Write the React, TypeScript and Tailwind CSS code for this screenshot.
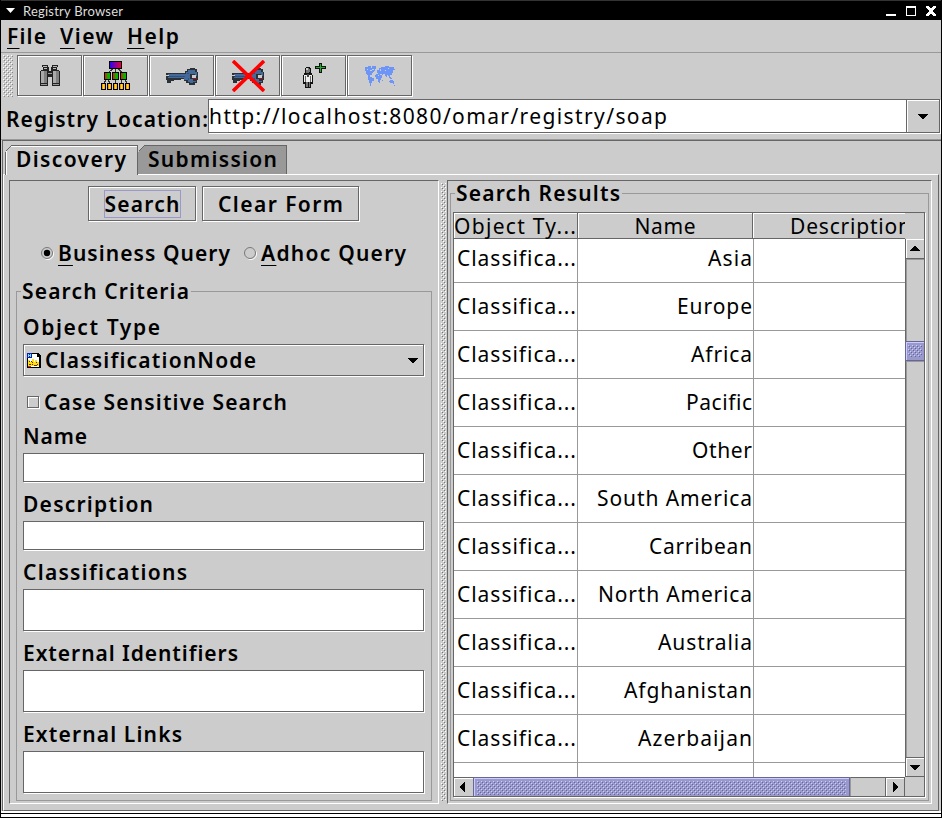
import { useLayoutEffect, useRef, useState, type ReactNode } from "react";
import clsx from "clsx";

/* Raised/etched one-pixel frame used by buttons and combo boxes */
const FLUSH = "border border-[#666] shadow-[inset_1px_1px_0_#fff,1px_1px_0_#fff]";
const FIELD = "border border-[#666] bg-white shadow-[1px_1px_0_#fff]";
const BOLD = "font-['Noto_Sans','Open_Sans',sans-serif] font-semibold text-[21px] leading-[28px]";
const PLAIN = "font-['Noto_Sans','Open_Sans',sans-serif] text-[21px] leading-[28px]";

/* Text spread over a given width by letter spacing */
function Fit({ w, className, children }: { w: number; className?: string; children: ReactNode }) {
  const ref = useRef<HTMLSpanElement>(null);
  const [gap, setGap] = useState(0);
  useLayoutEffect(() => {
    const el = ref.current;
    if (!el) return;
    el.style.letterSpacing = "0px";
    const n = Math.max(1, (el.textContent ?? "").length - 1);
    const g = (w - el.getBoundingClientRect().width) / n;
    el.style.letterSpacing = `${g}px`;
    setGap(g);
  }, [w]);
  return (
    <span ref={ref} className={clsx("inline-block shrink-0 whitespace-pre", className)} style={{ letterSpacing: gap, marginRight: -gap }}>
      {children}
    </span>
  );
}

function U({ children }: { children: string }) {
  return <span className="underline decoration-1 underline-offset-[4px]">{children}</span>;
}

function Bumps({ id, light, dark, className }: { id: string; light: string; dark: string; className: string }) {
  return (
    <svg className={clsx("block", className)} shapeRendering="crispEdges">
      <defs>
        <pattern id={id} width="4" height="4" patternUnits="userSpaceOnUse">
          <rect x="0" y="0" width="1" height="1" fill={light} />
          <rect x="1" y="1" width="1" height="1" fill={dark} />
          <rect x="2" y="2" width="1" height="1" fill={light} />
          <rect x="3" y="3" width="1" height="1" fill={dark} />
        </pattern>
      </defs>
      <rect width="100%" height="100%" fill={`url(#${id})`} />
    </svg>
  );
}

function Arrow({ dir }: { dir: "up" | "down" | "left" | "right" }) {
  const d = {
    down: "M0 0h10v1h-1v1h-1v1h-1v1h-1v1h-2v-1h-1v-1h-1v-1h-1v-1h-1z",
    up: "M0 5h10v-1h-1v-1h-1v-1h-1v-1h-1v-1h-2v1h-1v1h-1v1h-1v1h-1z",
    left: "M5 0v10h-1v-1h-1v-1h-1v-1h-1v-1h-1v-2h1v-1h1v-1h1v-1h1v-1z",
    right: "M0 0v10h1v-1h1v-1h1v-1h1v-1h1v-2h-1v-1h-1v-1h-1v-1h-1v-1z",
  }[dir];
  const flat = dir === "up" || dir === "down";
  return (
    <svg width={flat ? 10 : 5} height={flat ? 5 : 10} shapeRendering="crispEdges" className="block shrink-0">
      <path d={d} />
    </svg>
  );
}

function Binoculars() {
  return (
    <svg width="22" height="22" viewBox="0 0 22 22" shapeRendering="crispEdges">
      <path d="M3 0h6v2h1v4h2v-4h1v-2h6v2h-1v3h2v1h1v15h-8v-9h-4v9h-8v-15h1v-1h2v-3h-1z" fill="#222" />
      <path d="M4 1h4v1h-4zM14 1h4v1h-4zM5 3h3v1h-3zM14 3h3v1h-3z" fill="#bbb" />
      <path d="M2 6h3v12h-3zM14 6h3v12h-3z" fill="#aaa" />
      <path d="M5 6h3v12h-3zM17 6h3v12h-3z" fill="#808080" />
      <path d="M2 19h6v1h-6zM14 19h6v1h-6zM9 8h4v1h-4z" fill="#999" />
    </svg>
  );
}

function Tree() {
  return (
    <svg width="30" height="30" viewBox="0 0 30 30" shapeRendering="crispEdges">
      <defs>
        <linearGradient id="top"><stop stopColor="#20f" /><stop offset="1" stopColor="#f00030" /></linearGradient>
        <linearGradient id="mid"><stop offset=".1" stopColor="#e02000" /><stop offset=".6" stopColor="#00b800" /></linearGradient>
        <linearGradient id="leaf"><stop stopColor="#f40" /><stop offset=".55" stopColor="#fe2" /><stop offset="1" stopColor="#f60" /></linearGradient>
      </defs>
      <path d="M12 8L8 11M14.5 8v3M17 8L21 11M5 19L3 22M7 19L9 22M14.5 19v3M21 19L20 22M24 19L26 22" stroke="#333" fill="none" />
      <rect x="8.5" y=".5" width="12" height="7" fill="url(#top)" stroke="#000" />
      {[3.5, 11.5, 19.5].map((x) => <rect key={x} x={x} y="11.5" width="6" height="7" fill="url(#mid)" stroke="#000" />)}
      {[0.5, 6.5, 12.5, 18.5, 24.5].map((x) => <rect key={x} x={x} y="22.5" width="4" height="6" fill="url(#leaf)" stroke="#000" />)}
    </svg>
  );
}

function Key() {
  return (
    <>
      <path d="M0 5h19v-2h2v-2h3v-1h5v1h2v3h1v8h-1v3h-2v2h-6v-2h-3v-2h-2v-2h-3v1h-7v1h-3v2h-4v-3h-1v-2h-1v-2h10v-1h-10z" fill="#2a3238" />
      <path d="M2 6h18v-2h2v-2h7v2h2v4h-2v-2h-5v5h2v3h-4v-2h-4v-2h-16v-1h12v-1h-11z" fill="#456a9a" />
      <path d="M3 8h16v1h-16zM21 5h2v1h-2zM27 13h3v1h-3zM22 10h1v2h-1z" fill="#34507c" />
      <path d="M24 11h3v2h3v1h-3v1h-3z" fill="#456a9a" />
      <path d="M26 7h4v3h-4z" fill="#ccc" /><path d="M27 10h4v1h-4z" fill="#912" />
    </>
  );
}

function Person() {
  return (
    <svg width="23" height="26" viewBox="0 0 23 26" shapeRendering="crispEdges">
      <path d="M3 4h4v1h1v5h1v2h1v9h-2v4h-6v-4h-2v-9h1v-2h1v-5h1z" fill="#111" />
      <path d="M3 5h3v1h1v3h-1v1h-3z" fill="#777" /><path d="M3 5h2v2h-2z" fill="#ccc" />
      <path d="M1 12h8v7h-8z" fill="#eee" /><path d="M2.5 13v6M7.5 13v6" stroke="#666" />
      <path d="M4 11h2v3h-2z" fill="#444" /><path d="M3 19h2v5h-2zM6 19h1v5h-1z" fill="#777" />
      <path d="M16 0h3v3h4v3h-4v4h-3v-4h-4v-3h4z" fill="#111" /><path d="M17 1h1v3h4v1h-4v4h-1v-4h-4v-1h4z" fill="#20b030" />
    </svg>
  );
}

function WorldMap() {
  return (
    <svg width="32" height="22" viewBox="0 0 32 22" shapeRendering="crispEdges">
      <path d="M1 2h3v-1h3v2h1v2h2v2h-1v1h-1v2h-2v1h-2v-1h-1v-1h-1v-3h-1zM8 1h4v3h-1v2h-1v-2h-2zM4 11h2v1h2v1h2v3h-2v2h-1v3h-1v-3h-1v-3h-1zM13 5h2v-2h2v-1h4v-1h4v1h5v2h1v1h-2v3h-1v2h-2v2h-1v-1h-1v-1h-1v2h-1v-1h-1v-2h-2v1h-1v-1h-4v-1h-1zM12 9h4v1h2v3h-1v2h-1v3h-1v-1h-1v-3h-2v-2h-1v-2h1zM25 12h2v1h1v1h-2v-1h-1zM26 15h3v1h1v3h-1v-1h-3v-1h-1v-1h1zM30 20h1v1h-1zM18 15h1v1h-1z" fill="#6d95f8" />
      <path d="M3 4h1v1h-1zM6 5h2v1h-2zM16 4h1v2h-1zM21 5h1v1h-1zM24 3h1v1h-1zM14 10h1v1h-1z" fill="#c4cde4" />
    </svg>
  );
}

function ToolButton({ children }: { children: ReactNode }) {
  return <div className={clsx("mr-px flex h-[41px] w-[65px] items-center justify-center pl-px", FLUSH)}>{children}</div>;
}

function Toolbar() {
  return (
    <div className="flex h-[46px] shrink-0 pt-[2px] pl-[2px]">
      <Bumps id="b-tool" light="#fff" dark="#888" className="mr-[4px] h-[42px] w-[10px]" />
      <ToolButton><Binoculars /></ToolButton>
      <ToolButton><Tree /></ToolButton>
      <ToolButton><svg width="32" height="18" shapeRendering="crispEdges" className="mt-[3px]"><Key /></svg></ToolButton>
      <ToolButton>
        <svg width="33" height="32">
          <g transform="translate(0 8)" shapeRendering="crispEdges"><Key /></g>
          <path d="M1 1L32 31M32 1L1 31" stroke="#f00" strokeWidth="3.6" />
        </svg>
      </ToolButton>
      <ToolButton><Person /></ToolButton>
      <ToolButton><WorldMap /></ToolButton>
    </div>
  );
}

function Tab({ label, w, active, className }: { label: string; w: number; active?: boolean; className: string }) {
  return (
    <div className={clsx("relative border-t border-r border-[#666]", className, active ? "z-10 h-[30px] border-l bg-[#ccc] shadow-[inset_1px_1px_0_#fff]" : "h-[29px] bg-[#999]")}>
      <svg width="7" height="7" shapeRendering="crispEdges" className={clsx("absolute -top-px", active ? "-left-px" : "left-0")}>
        <path d="M0 0h7L0 7z" fill="#ccc" />
        <path d="M0 6h1v-1h1v-1h1v-1h1v-1h1v-1h1v-1h1v1h-1v1h-1v1h-1v1h-1v1h-1v1h-1z" fill="#666" />
      </svg>
      <Fit w={w} className={clsx("-mt-px", BOLD)}>{label}</Fit>
    </div>
  );
}

function Radio({ on, className }: { on?: boolean; className?: string }) {
  return (
    <svg width="13" height="13" className={clsx("shrink-0", className)}>
      <circle cx="7" cy="7" r="5.5" fill="none" stroke="#fff" />
      <circle cx="6" cy="6" r="5.5" fill="#ccc" stroke="#777" />
      {on && <circle cx="6" cy="6" r="3.2" fill="#000" />}
    </svg>
  );
}

/* Title that interrupts the top line of a group frame */
function Legend({ w, children }: { w: number; children: string }) {
  return (
    <div className="-mt-[11px] mb-[4px] ml-[4px] flex h-[20px] items-center self-start bg-[#ccc] pr-[2px] pl-px">
      <Fit w={w} className={BOLD}>{children}</Fit>
    </div>
  );
}

function Field({ label, w, tall }: { label: string; w: number; tall?: boolean }) {
  return (
    <div className="flex flex-col">
      <Fit w={w} className={clsx("self-start", BOLD)}>{label}</Fit>
      <div className={clsx("mt-[3px] mb-[8px] w-[401px]", FIELD, tall ? "h-[42px]" : "h-[29px]")} />
    </div>
  );
}

function NodeIcon() {
  return (
    <svg width="14" height="15" shapeRendering="crispEdges" className="mr-[4px] shrink-0">
      <path d="M0 0h12v1h1v1h1v13h-14z" fill="#000" /><path d="M1 1h9v3h2v10h-11z" fill="#fff" />
      <path d="M0 0h5v5h-5z" fill="#12a" /><path d="M1.5 1v3M3.5 1v3M1 2.5h3" stroke="#7df" />
      <path d="M1 7h2v2h2v-3h2v3h1v-2h2v2h2v4h-11z" fill="#fd1" />
      <path d="M2 11h2v1h-2zM5 9h1v1h-1zM7 12h3v1h-3zM9 9h1v1h-1zM4 8h1v1h-1zM10 11h1v1h-1zM5 11h1v1h-1zM2 8h1v1h-1z" fill="#530" /><path d="M1 13h3v1h-3z" fill="#d22" />
    </svg>
  );
}

function SearchForm() {
  return (
    <section className="flex h-[624px] w-[430px] shrink-0 flex-col border border-t-[#666] border-r-white border-b-white border-l-[#666]">
      <div className="mt-[5px] ml-[78px] flex gap-[6px]">
        <div className={clsx("flex h-[35px] w-[108px] items-center justify-center", FLUSH)}>
          <div className="flex h-[28px] w-[77px] items-center justify-center border border-[#99c]"><Fit w={75} className={BOLD}>Search</Fit></div>
        </div>
        <div className={clsx("flex h-[35px] w-[157px] items-center justify-center", FLUSH)}><Fit w={125} className={BOLD}>Clear Form</Fit></div>
      </div>
      <div className="mt-[18px] ml-[31px] flex h-[28px] items-center">
        <Radio on className="mr-[4px]" />
        <Fit w={172} className={BOLD}><U>B</U>usiness Query</Fit>
        <Radio className="mr-[4px] ml-[14px]" />
        <Fit w={145} className={BOLD}><U>A</U>dhoc Query</Fit>
      </div>
      <div className="mt-[24px] ml-[6px] flex h-[510px] w-[416px] flex-col border border-[#999]">
        <Legend w={167}>Search Criteria</Legend>
        <div className="mt-[8px] ml-[6px] flex flex-col">
          <Fit w={137} className={clsx("self-start", BOLD)}>Object Type</Fit>
          <div className={clsx("mt-[3px] flex h-[32px] w-[401px] items-center pr-[5px] pl-[3px]", FLUSH)}>
            <NodeIcon />
            <Fit w={211} className={BOLD}>ClassificationNode</Fit>
            <div className="ml-auto"><Arrow dir="down" /></div>
          </div>
          <div className="mt-[12px] mb-[6px] flex h-[28px] items-center pl-[4px]">
            <div className={clsx("mr-[5px] size-[12px]", FLUSH)} />
            <Fit w={243} className={BOLD}>Case Sensitive Search</Fit>
          </div>
          <Field label="Name" w={64} />
          <Field label="Description" w={130} />
          <Field label="Classifications" w={164} tall />
          <Field label="External Identifiers" w={215} tall />
          <Field label="External Links" w={159} tall />
        </div>
      </div>
    </section>
  );
}

const ROWS: [string, number][] = [
  ["Asia", 44], ["Europe", 75], ["Africa", 61], ["Pacific", 66], ["Other", 60], ["South America", 155],
  ["Carribean", 103], ["North America", 154], ["Australia", 94], ["Afghanistan", 128], ["Azerbaijan", 114],
];

function Results() {
  return (
    <section className="h-[624px] w-[485px] shrink-0 border border-t-[#666] border-r-white border-b-white border-l-[#666]">
      <div className="mt-[12px] ml-[2px] flex h-[608px] w-[479px] flex-col border border-[#999]">
        <Legend w={164}>Search Results</Legend>
        <div className="mt-[5px] ml-[2px] flex h-[585px] w-[472px] flex-col border border-[#666] shadow-[1px_1px_0_#fff]">
          <div className={clsx("flex h-[26px] w-[451px] shrink-0 overflow-hidden", PLAIN)}>
            <div className="w-[124px] shrink-0 border-r border-b border-[#666] leading-[27px] shadow-[inset_1px_1px_0_#fff]"><Fit w={122}>Object Ty...</Fit></div>
            <div className="w-[175px] shrink-0 border-r border-b border-[#666] text-center leading-[27px] shadow-[inset_1px_1px_0_#fff]"><Fit w={61}>Name</Fit></div>
            <div className="w-[152px] shrink-0 overflow-hidden border-b border-[#666] pl-[37px] leading-[27px] shadow-[inset_1px_1px_0_#fff]"><Fit w={121}>Description</Fit></div>
          </div>
          <div className="flex h-[538px] shrink-0">
            <div className={clsx("w-[451px] overflow-hidden bg-white", PLAIN)}>
              <div className="-mt-[4px]">
                {ROWS.map(([name, w]) => (
                  <div key={name} className="flex h-[48px] border-b border-[#999] leading-[46px]">
                    <div className="w-[124px] border-r border-[#999] pl-[3px]"><Fit w={119}>Classifica...</Fit></div>
                    <div className="flex w-[176px] justify-end border-r border-[#999] pr-px"><Fit w={w}>{name}</Fit></div>
                  </div>
                ))}
                <div className="flex h-[48px]">
                  <div className="w-[124px] border-r border-[#999]" />
                  <div className="w-[176px] border-r border-[#999]" />
                </div>
              </div>
            </div>
            <div className="flex w-[19px] flex-col border-l border-[#666]">
              <div className="flex h-[20px] items-center justify-center border-b border-[#666] shadow-[inset_1px_1px_0_#fff]"><Arrow dir="up" /></div>
              <div className="h-[82px] border-t border-l border-[#999]" />
              <div className="-ml-px flex h-[20px] items-center justify-center border border-r-0 border-[#669] bg-[#99c] shadow-[inset_1px_1px_0_#ccf]">
                <Bumps id="b-v" light="#ccf" dark="#669" className="h-[12px] w-[14px]" />
              </div>
              <div className="grow border-t border-l border-[#999]" />
              <div className="flex h-[20px] items-center justify-center border-y border-[#666] shadow-[inset_1px_1px_0_#fff]"><Arrow dir="down" /></div>
            </div>
          </div>
          <div className="flex h-[19px]">
            <div className="flex w-[19px] items-center justify-center border-t border-[#666] pr-[2px] shadow-[inset_1px_1px_0_#fff]"><Arrow dir="left" /></div>
            <div className="flex w-[377px] items-center justify-center border border-b-0 border-[#669] bg-[#99c] shadow-[inset_1px_1px_0_#ccf]">
              <Bumps id="b-h" light="#ccf" dark="#669" className="mt-[1px] h-[14px] w-[369px]" />
            </div>
            <div className="w-[35px] border-t border-l border-t-[#666] border-l-[#999]" />
            <div className="flex w-[20px] items-center justify-center border border-b-0 border-[#666] shadow-[inset_1px_1px_0_#fff]"><Arrow dir="right" /></div>
          </div>
        </div>
      </div>
    </section>
  );
}

export default function App() {
  return (
    <div className="flex h-[818px] w-[942px] flex-col overflow-hidden border-x border-black bg-[#ccc] text-black">
      <header className="flex h-[20px] shrink-0 items-center border-t border-[#333] bg-black pr-[4px] pl-[5px] text-white">
        <svg width="9" height="5" className="mr-[8px]"><path d="M0 0h9L4.5 5z" fill="#fff" /></svg>
        <Fit w={100} className="font-['Lato',sans-serif] text-[13px] leading-[18px] text-[#ddd]">Registry Browser</Fit>
        <svg width="51" height="11" shapeRendering="crispEdges" className="mb-px ml-auto">
          <path d="M0 9h10v2h-10z" fill="#fff" />
          <path d="M20 1h10v10h-10zM21 3v7h8v-7z" fillRule="evenodd" fill="#fff" />
          <path d="M40 1h3v1h1v1h2v-1h1v-1h3v2h-1v1h-1v1h-1v2h1v1h1v1h1v2h-3v-1h-1v-1h-2v1h-1v1h-3v-2h1v-1h1v-1h1v-2h-1v-1h-1v-1h-1z" fill="#fff" />
        </svg>
      </header>
      <nav className="flex h-[33px] shrink-0 gap-[14px] border-b border-[#999] pt-[2px] pl-[6px]">
        <Fit w={39} className={BOLD}><U>F</U>ile</Fit>
        <Fit w={53} className={BOLD}><U>V</U>iew</Fit>
        <Fit w={52} className={BOLD}><U>H</U>elp</Fit>
      </nav>
      <Toolbar />
      <div className="flex h-[40px] shrink-0">
        <Fit w={202} className={clsx("mt-[6px] ml-[5px]", BOLD)}>Registry Location:</Fit>
        <div className={clsx("mr-px ml-auto flex h-[34px] w-[732px] shrink-0", FIELD)}>
          <div className="w-[697px]"><Fit w={458} className={clsx("mt-[2px]", PLAIN)}>http://localhost:8080/omar/registry/soap</Fit></div>
          <div className="flex w-[33px] items-center justify-center border-l border-[#666] bg-[#ccc] shadow-[inset_1px_1px_0_#fff]"><Arrow dir="down" /></div>
        </div>
      </div>
      <main className="flex h-[672px] shrink-0 flex-col border-t border-[#999]">
        <div className="ml-px flex grow flex-col border-t border-l border-[#666]">
          <div className="flex h-[33px] shrink-0 pt-[4px] pl-[2px]">
            <Tab label="Discovery" w={110} active className="w-[133px] pl-[10px]" />
            <Tab label="Submission" w={129} className="w-[149px] pl-[10px]" />
          </div>
          <div className="flex h-[637px] w-[936px] border border-t-white border-r-[#666] border-b-[#666] border-l-white pt-[5px] pl-[5px]">
            <SearchForm />
            <div className="w-[8px] shrink-0 pt-[3px] pl-[2px]"><Bumps id="b-split" light="#fff" dark="#777" className="h-[618px] w-[5px]" /></div>
            <Results />
          </div>
        </div>
      </main>
      <footer className="h-[7px] shrink-0 bg-white pt-[2px]"><div className="h-[5px] border-y border-black" /></footer>
    </div>
  );
}
